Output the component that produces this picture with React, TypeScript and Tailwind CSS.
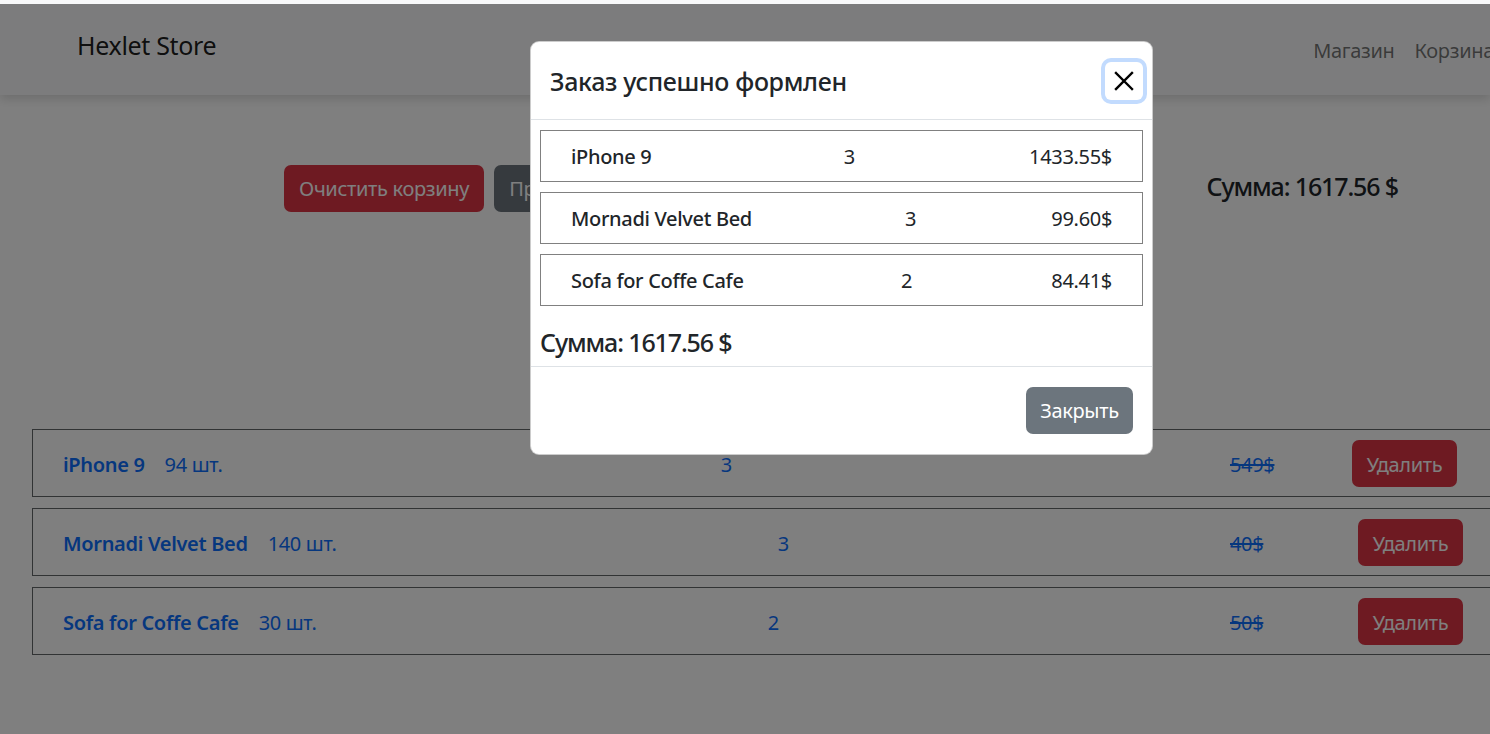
import React from "react";

const pageRows = [
  { name: "iPhone 9", count: "94 шт.", qty: "3", price: "549$", priceBox: "w-[122px]", btn: "mr-[6px]" },
  { name: "Mornadi Velvet Bed", count: "140 шт.", qty: "3", price: "40$", priceBox: "w-[128px]", btn: "" },
  { name: "Sofa for Coffe Cafe", count: "30 шт.", qty: "2", price: "50$", priceBox: "w-[128px]", btn: "" },
];

const modalRows = [
  { name: "iPhone 9", qty: "3", price: "1433.55$" },
  { name: "Mornadi Velvet Bed", qty: "3", price: "99.60$" },
  { name: "Sofa for Coffe Cafe", qty: "2", price: "84.41$" },
];

export default function App() {
  return (
    <div className="relative w-[1490px] h-[734px] overflow-hidden bg-white text-[#212529] tracking-[-0.02em] font-['Noto_Sans','Open_Sans',sans-serif]">
      {/* Header */}
      <header className="h-[95px] bg-[#f8f9fa] shadow-[0_4px_10px_rgba(0,0,0,0.15)] flex items-center justify-between pl-[77px] pr-0 pt-[4px]">
        <div className="text-[25px] leading-[30px] text-black/90 -mt-[10px]">Hexlet Store</div>
        <nav className="flex items-center gap-[20px] text-[20px] text-black/55 mt-[2px] mr-[-4px]">
          <span>Магазин</span>
          <span>Корзина</span>
        </nav>
      </header>

      {/* Actions + sum */}
      <div className="flex items-center justify-between pl-[284px] pr-[92px] mt-[70px]">
        <div className="flex items-center gap-[10px]">
          <button className="h-[47px] px-[15px] rounded-[7px] bg-[#dc3545] text-white text-[20px]">Очистить корзину</button>
          <button className="h-[47px] px-[15px] rounded-[7px] bg-[#6c757d] text-white text-[20px]">Приобрести</button>
        </div>
        <div className="text-[25px] font-medium leading-[30px] tracking-[-0.045em] -mt-[6px]">Сумма: 1617.56 $</div>
      </div>

      {/* Cart rows */}
      <div className="flex flex-col gap-[11px] mt-[217px] pl-[32px]">
        {pageRows.map((r) => (
          <div key={r.name} className="w-[1462px] h-[68px] border border-[#212529]/70 flex items-center justify-between px-[30px] text-[20px] text-[#0d6efd]">
            <div className="flex items-center gap-[20px] pt-[4px]">
              <span className="font-semibold">{r.name}</span>
              <span>{r.count}</span>
            </div>
            <span className="pt-[4px]">{r.qty}</span>
            <div className="flex items-center">
              <span className={`${r.priceBox} line-through pt-[4px]`}>{r.price}</span>
              <button className={`${r.btn} w-[105px] h-[47px] pt-[3px] rounded-[7px] bg-[#dc3545] text-white text-[20px]`}>Удалить</button>
            </div>
          </div>
        ))}
      </div>

      {/* Backdrop */}
      <div className="absolute left-0 right-0 top-[4px] bottom-0 bg-black/50" />

      {/* Modal */}
      <div className="absolute left-[530px] top-[41px] w-[623px] bg-white rounded-[9px] border border-black/20 flex flex-col">
        <div className="h-[78px] flex items-center justify-between pl-[19px] pr-[9px] border-b border-[#dee2e6]">
          <div className="text-[25px] font-medium leading-[30px] text-[#212529]">Заказ успешно формлен</div>
          <button className="w-[38px] h-[38px] rounded-[6px] ring-4 ring-[#c2dbfe] flex items-center justify-center">
            <svg width="20" height="20" viewBox="0 0 20 20" fill="none" stroke="#000" strokeWidth="2.4" strokeLinecap="square">
              <path d="M2 2 L18 18 M18 2 L2 18" />
            </svg>
          </button>
        </div>
        <div className="px-[9px] pt-[10px] pb-[9px] flex flex-col">
          <div className="flex flex-col gap-[10px]">
            {modalRows.map((r) => (
              <div key={r.name} className="h-[52px] border border-[#808080] flex items-center justify-between px-[30px] text-[20px]">
                <span className="font-medium pt-[2px]">{r.name}</span>
                <span className="ml-[18px] pt-[2px]">{r.qty}</span>
                <span className="pt-[2px]">{r.price}</span>
              </div>
            ))}
          </div>
          <div className="mt-[21px] text-[25px] font-medium leading-[30px] tracking-[-0.045em]">Сумма: 1617.56 $</div>
        </div>
        <div className="h-[88px] border-t border-[#dee2e6] flex items-center justify-end pr-[19px]">
          <button className="w-[107px] h-[47px] rounded-[7px] bg-[#6c757d] text-white text-[20px]">Закрыть</button>
        </div>
      </div>
    </div>
  );
}
